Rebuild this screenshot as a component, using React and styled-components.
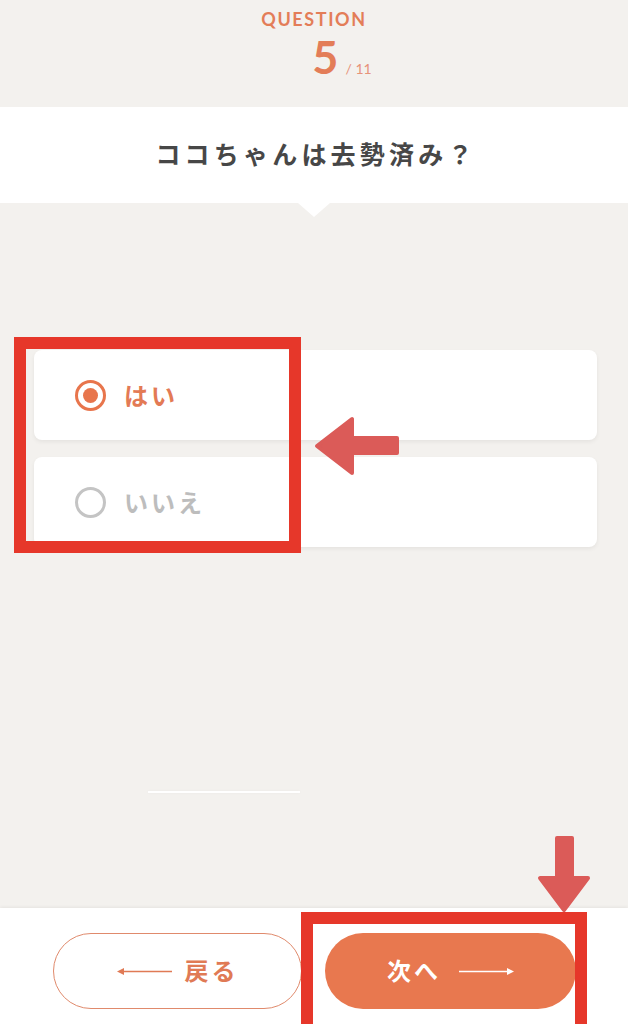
import React, { useState } from "react";
import styled, { createGlobalStyle } from "styled-components";

const GlobalStyle = createGlobalStyle`
  * { box-sizing: border-box; }
  body {
    margin: 0;
    background: #f3f1ee;
    font-family: "Lato", "Noto Sans CJK JP", sans-serif;
  }
`;

const JP = `"Noto Sans CJK JP", "Noto Sans", sans-serif`;

const Page = styled.div`
  position: relative;
  width: 628px;
  min-height: 1024px;
  display: flex;
  flex-direction: column;
  background: #f3f1ee;
  overflow: hidden;
`;

const Header = styled.header`
  height: 107px;
  display: flex;
  flex-direction: column;
  align-items: center;
  padding-top: 9px;
  color: #e37d58;
`;

const Label = styled.div`
  font-family: "Lato", sans-serif;
  font-weight: 700;
  font-size: 18px;
  letter-spacing: 1.6px;
  line-height: 20px;
`;

const Counter = styled.div`
  display: flex;
  align-items: baseline;
  margin-left: 56px;
  margin-top: 3px;
  .current {
    font-family: "Lato", sans-serif;
    font-weight: 700;
    font-size: 45px;
    line-height: 50px;
  }
  .total {
    margin-left: 7px;
    font-size: 14px;
    color: #e7937a;
  }
`;

const QuestionBand = styled.div`
  position: relative;
  height: 96px;
  background: #fff;
  display: flex;
  align-items: center;
  justify-content: center;
  &::after {
    content: "";
    position: absolute;
    top: 100%;
    left: 298px;
    border-left: 16px solid transparent;
    border-right: 16px solid transparent;
    border-top: 14px solid #fff;
  }
`;

const QuestionText = styled.h1`
  margin: 0 0 4px 4px;
  font-family: ${JP};
  font-weight: 700;
  font-size: 25px;
  letter-spacing: 4.2px;
  color: #474747;
`;

const Main = styled.main`
  flex: 1;
  padding: 147px 31px 0 34px;
  display: flex;
  flex-direction: column;
`;

const Options = styled.div`
  display: flex;
  flex-direction: column;
  gap: 17px;
`;

const OptionCard = styled.label`
  height: 90px;
  display: flex;
  align-items: center;
  gap: 18px;
  padding-left: 41px;
  background: #fff;
  border-radius: 8px;
  box-shadow: 0 2px 4px rgba(0, 0, 0, 0.06);
  cursor: pointer;
`;

const Radio = styled.span`
  position: relative;
  width: 31px;
  height: 31px;
  border-radius: 50%;
  border: 3px solid ${(p) => (p.$checked ? "#e8754c" : "#c4c4c4")};
  &::after {
    content: "";
    display: ${(p) => (p.$checked ? "block" : "none")};
    position: absolute;
    inset: 5px;
    border-radius: 50%;
    background: #e8754c;
  }
`;

const OptionText = styled.span`
  font-family: ${JP};
  font-weight: 700;
  font-size: 24px;
  letter-spacing: 3px;
  margin-top: -2px;
  color: ${(p) => (p.$checked ? "#e37a55" : "#bdbdbd")};
`;

const Progress = styled.div`
  margin: 244px 0 0 114px;
  width: 152px;
  height: 2px;
  background: #fff;
  box-shadow: 0 0 3px rgba(0, 0, 0, 0.04);
`;

const Footer = styled.footer`
  height: 116px;
  background: #fff;
  box-shadow: 0 -1px 3px rgba(0, 0, 0, 0.06);
  display: flex;
  gap: 23px;
  padding: 25px 0 0 53px;
`;

const PillButton = styled.button`
  width: ${(p) => (p.$primary ? "251px" : "249px")};
  height: 76px;
  border-radius: 38px;
  border: ${(p) => (p.$primary ? "none" : "1.5px solid #e08a6c")};
  background: ${(p) => (p.$primary ? "#e8784f" : "#fff")};
  color: ${(p) => (p.$primary ? "#fff" : "#e07a55")};
  display: flex;
  align-items: center;
  justify-content: center;
  gap: ${(p) => (p.$primary ? "18px" : "13px")};
  padding: 0;
  font-family: ${JP};
  font-weight: 700;
  font-size: 24px;
  letter-spacing: 3px;
  cursor: pointer;
  svg { flex-shrink: 0; }
  span { margin-top: -3px; }
`;

const Frame = styled.div`
  position: absolute;
  left: ${(p) => p.$x}px;
  top: ${(p) => p.$y}px;
  width: ${(p) => p.$w}px;
  height: ${(p) => p.$h}px;
  border: 12px solid #e6372a;
  pointer-events: none;
`;

const Marker = styled.svg`
  position: absolute;
  left: ${(p) => p.$x}px;
  top: ${(p) => p.$y}px;
  pointer-events: none;
`;

const LineArrow = ({ dir, color }) => (
  <svg width="55" height="9" viewBox="0 0 55 9">
    {dir === "left" ? (
      <>
        <line x1="5" y1="4.5" x2="55" y2="4.5" stroke={color} strokeWidth="1.6" />
        <polygon points="0,4.5 7,1 7,8" fill={color} />
      </>
    ) : (
      <>
        <line x1="0" y1="4.5" x2="50" y2="4.5" stroke={color} strokeWidth="1.6" />
        <polygon points="55,4.5 48,1 48,8" fill={color} />
      </>
    )}
  </svg>
);

const choices = ["はい", "いいえ"];

export default function App() {
  const [selected, setSelected] = useState(0);

  return (
    <Page>
      <GlobalStyle />
      <Header>
        <Label>QUESTION</Label>
        <Counter>
          <span className="current">5</span>
          <span className="total">/ 11</span>
        </Counter>
      </Header>
      <QuestionBand>
        <QuestionText>ココちゃんは去勢済み？</QuestionText>
      </QuestionBand>
      <Main>
        <Options>
          {choices.map((c, i) => (
            <OptionCard key={c} onClick={() => setSelected(i)}>
              <Radio $checked={selected === i} />
              <OptionText $checked={selected === i}>{c}</OptionText>
            </OptionCard>
          ))}
        </Options>
        <Progress />
      </Main>
      <Footer>
        <PillButton>
          <LineArrow dir="left" color="#e07a55" />
          <span>戻る</span>
        </PillButton>
        <PillButton $primary>
          <span>次へ</span>
          <LineArrow dir="right" color="#fff" />
        </PillButton>
      </Footer>

      {/* annotation overlays */}
      <Frame $x={14} $y={337} $w={287} $h={216} />
      <Frame $x={301} $y={912} $w={286} $h={150} />
      <Marker $x={312} $y={415} width="92" height="64" viewBox="0 0 92 64">
        <polygon
          points="5,31 40,4 40,23 85,23 85,38 40,38 40,58"
          fill="#db5b58"
          stroke="#db5b58"
          strokeWidth="4"
          strokeLinejoin="round"
        />
      </Marker>
      <Marker $x={534} $y={832} width="60" height="84" viewBox="0 0 60 84">
        <polygon
          points="23,6 38,6 38,46 54,46 30,78 6,46 23,46"
          fill="#db5b58"
          stroke="#db5b58"
          strokeWidth="4"
          strokeLinejoin="round"
        />
      </Marker>
    </Page>
  );
}
